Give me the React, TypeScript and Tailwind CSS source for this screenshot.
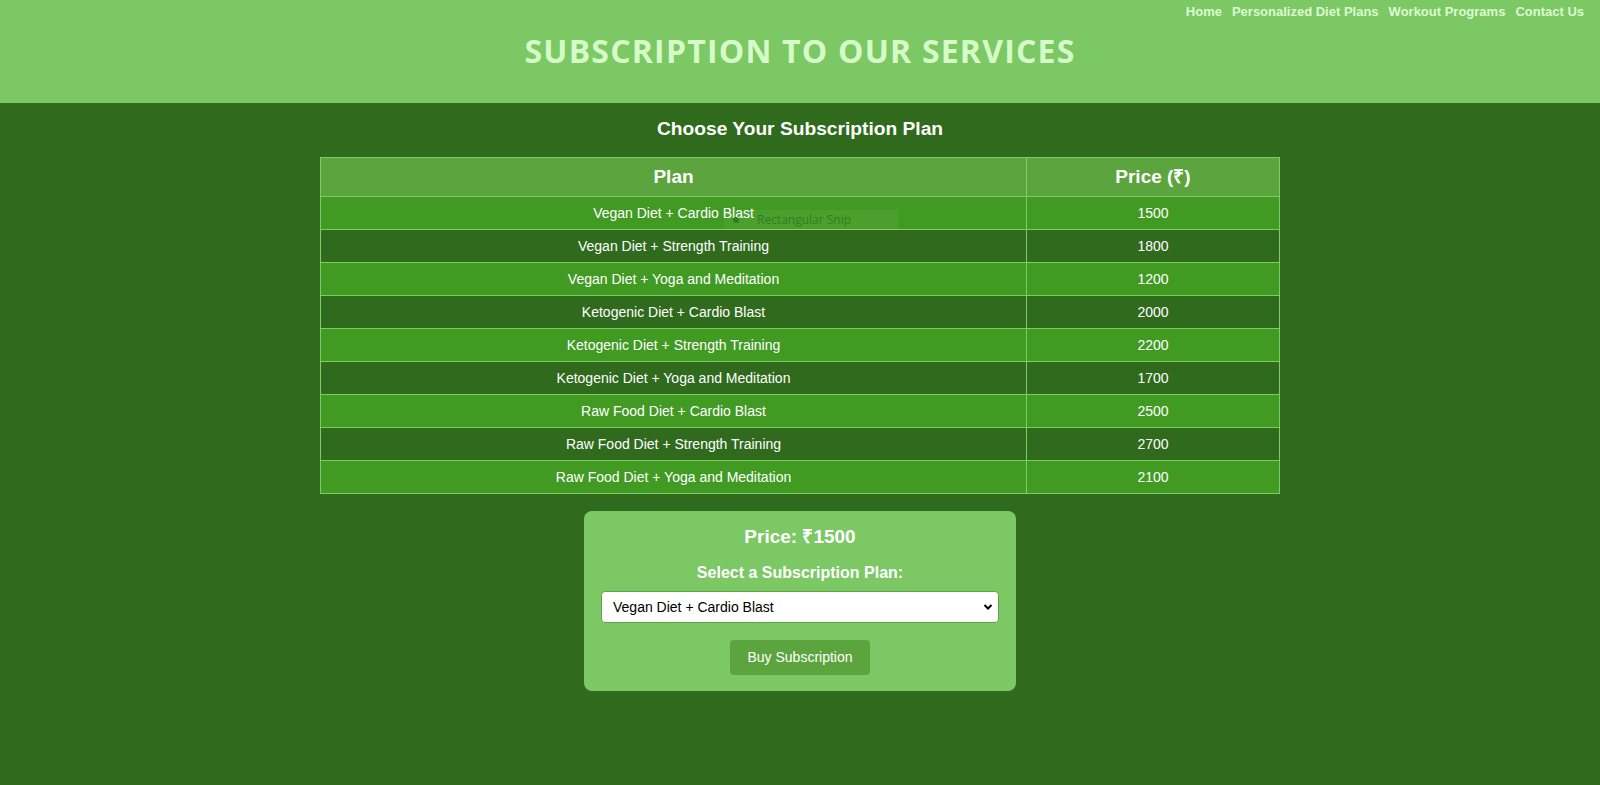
const plans = [
  { name: 'Vegan Diet + Cardio Blast', price: 1500 },
  { name: 'Vegan Diet + Strength Training', price: 1800 },
  { name: 'Vegan Diet + Yoga and Meditation', price: 1200 },
  { name: 'Ketogenic Diet + Cardio Blast', price: 2000 },
  { name: 'Ketogenic Diet + Strength Training', price: 2200 },
  { name: 'Ketogenic Diet + Yoga and Meditation', price: 1700 },
  { name: 'Raw Food Diet + Cardio Blast', price: 2500 },
  { name: 'Raw Food Diet + Strength Training', price: 2700 },
  { name: 'Raw Food Diet + Yoga and Meditation', price: 2100 },
];

const navLinks = ['Home', 'Personalized Diet Plans', 'Workout Programs', 'Contact Us'];

export default function App() {
  return (
    <div className="min-h-[785px] bg-[#2f6a1d] font-['Liberation_Sans',Arial,sans-serif] text-white">
      <header className="h-[103px] bg-[#7bc864]">
        <nav className="flex justify-end gap-[10px] pr-[16px] pt-[4px] text-[13px] leading-[16px] font-bold text-[#dcfbd0]">
          {navLinks.map((link) => (
            <a key={link} href="#">
              {link}
            </a>
          ))}
        </nav>
        <h1 className="mt-[11px] text-center font-['Open_Sans',sans-serif] text-[32px] leading-[40px] font-bold tracking-[1.2px] text-[#d6fbc8]">
          SUBSCRIPTION TO OUR SERVICES
        </h1>
      </header>

      <main className="relative flex flex-col items-center">
        <h2 className="mt-[15px] text-[19.2px] leading-[22px] font-bold">Choose Your Subscription Plan</h2>

        <table className="mt-[17px] w-[960px] border-collapse border border-[#7dcc66] text-center">
          <thead>
            <tr className="bg-[#5ca53e]">
              <th className="h-[39px] border border-[#7dcc66] text-[19px] font-bold">Plan</th>
              <th className="h-[39px] w-[253px] border border-[#7dcc66] text-[19px] font-bold">Price (₹)</th>
            </tr>
          </thead>
          <tbody>
            {plans.map((plan, i) => (
              <tr key={plan.name} className={i % 2 === 0 ? 'bg-[#419a22]' : 'bg-[#2f6a1d]'}>
                <td className="h-[33px] border border-[#7dcc66] text-[14px]">{plan.name}</td>
                <td className="h-[33px] border border-[#7dcc66] text-[14px]">{plan.price}</td>
              </tr>
            ))}
          </tbody>
        </table>

        {/* leftover screen-snip label floating over the first row */}
        <div className="absolute left-[724px] top-[107px] flex h-[20px] w-[174px] items-center bg-white/5 pl-[9px] font-['Open_Sans',sans-serif] text-[12px] text-[#2f7f22]">
          <span className="h-[6px] w-[6px] rounded-full bg-[#2f7f22]" />
          <span className="pl-[18px]">Rectangular Snip</span>
        </div>

        <div className="mt-[17px] flex w-[432px] flex-col items-center rounded-lg bg-[#7bc864] px-[17px] pt-[15px] pb-[16px]">
          <h3 className="text-[19px] leading-[22px] font-bold">Price: ₹1500</h3>
          <label className="mt-[16px] text-[16px] leading-[18px] font-bold">Select a Subscription Plan:</label>
          <div className="relative mt-[9px] w-full">
            <select className="h-[32px] w-full appearance-none rounded border border-[#5ca53e] bg-white pl-[11px] text-[14px] text-black">
              {plans.map((plan) => (
                <option key={plan.name}>{plan.name}</option>
              ))}
            </select>
            <svg
              className="pointer-events-none absolute right-[6px] top-[11px] h-[10px] w-[10px]"
              viewBox="0 0 10 10"
              fill="none"
              stroke="black"
              strokeWidth="2"
            >
              <path d="M1.5 3 L5 6.5 L8.5 3" />
            </svg>
          </div>
          <button className="mt-[17px] h-[35px] rounded bg-[#5ca53e] px-[17px] text-[14px] text-white">
            Buy Subscription
          </button>
        </div>
      </main>
    </div>
  );
}
